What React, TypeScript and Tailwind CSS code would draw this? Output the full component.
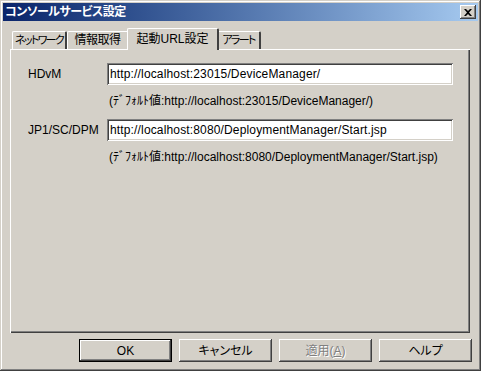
import React from "react";

const raised =
  "shadow-[inset_-1px_-1px_#404040,inset_1px_1px_#ffffff,inset_-2px_-2px_#808080,inset_2px_2px_#d4d0c8]";

function Tab({ label, selected, w, small }: { label: string; selected?: boolean; w: string; small?: boolean }) {
  if (selected) {
    return (
      <div
        className={`relative z-10 -mx-[2px] ${w} shrink-0 whitespace-nowrap h-[22px] -mb-[1px] bg-[#d4d0c8] border-t border-l border-white border-r-2 border-r-[#404040] rounded-t-[2px] flex items-start justify-center pt-[3px] text-black`}
      >
        {label}
      </div>
    );
  }
  return (
    <div
      className={`${w} shrink-0 whitespace-nowrap h-[18px] bg-[#d4d0c8] border-t border-l border-white border-r-2 border-r-[#404040] rounded-t-[2px] flex items-start justify-center pt-[1px] text-black ${
        small ? "text-[11px] tracking-[-1.7px]" : "tracking-[-0.5px]"
      }`}
    >
      {label}
    </div>
  );
}

function Btn({ children, def, disabled }: { children: React.ReactNode; def?: boolean; disabled?: boolean }) {
  if (def) {
    return (
      <div className="w-[93px] h-[23px] border border-black">
        <div className={`w-full h-full ${raised} flex items-center justify-center text-black`}>{children}</div>
      </div>
    );
  }
  return (
    <div
      className={`w-[93px] h-[23px] ${raised} flex items-center justify-center ${
        disabled ? "text-[#808080] [text-shadow:1px_1px_#ffffff]" : "text-black"
      }`}
    >
      {children}
    </div>
  );
}

function Field({ value }: { value: string }) {
  return (
    <div className="w-[346px] h-[22px] bg-white shadow-[inset_1px_1px_#808080,inset_-1px_-1px_#ffffff,inset_2px_2px_#404040,inset_-2px_-2px_#d4d0c8] flex items-center pl-[3px] text-black tracking-[0.15px] whitespace-nowrap">
      {value}
    </div>
  );
}

export default function App() {
  return (
    <div
      className="w-[481px] h-[371px] bg-[#d4d0c8] p-[3px] flex flex-col text-[12px] leading-[14px] [font-feature-settings:'palt'] shadow-[inset_-1px_-1px_#404040,inset_1px_1px_#d4d0c8,inset_-2px_-2px_#808080,inset_2px_2px_#ffffff]"
      style={{ fontFamily: '"Liberation Sans", "Noto Sans CJK JP", sans-serif' }}
    >
      {/* title bar */}
      <div className="h-[18px] bg-gradient-to-r from-[#0a246a] to-[#a6caf0] flex items-center justify-between pl-[2px] pr-[2px]">
        <span className="text-white font-bold text-[12px] tracking-[-0.5px]">コンソールサービス設定</span>
        <div className={`w-[16px] h-[14px] bg-[#d4d0c8] ${raised} flex items-center justify-center`}>
          <svg width="8" height="7" viewBox="0 0 8 7">
            <path d="M0 0h2l2 2 2-2h2L5 3.5 8 7H6L4 5 2 7H0l3-3.5z" fill="#000" />
          </svg>
        </div>
      </div>

      <div className="flex flex-col px-[7px] pt-[7px] flex-1">
        {/* tabs */}
        <div className="flex items-end h-[21px] pl-[2px]">
          <Tab label="ネットワーク" w="w-[55px]" small />
          <Tab label="情報取得" w="w-[62px]" />
          <Tab label="起動URL設定" w="w-[92px]" selected />
          <Tab label="アラート" w="w-[44px]" small />
        </div>

        {/* panel */}
        <div className="w-[460px] h-[284px] border-t border-l border-white shadow-[inset_-1px_-1px_#404040,inset_-2px_-2px_#808080] pt-[13px] pl-[17px]">
          <div className="flex items-center h-[22px]">
            <span className="w-[79px] text-black">HDvM</span>
            <Field value="http://localhost:23015/DeviceManager/" />
          </div>
          <div className="mt-[8px] h-[16px] flex items-center pl-[81px] text-black whitespace-nowrap">
            (ﾃﾞﾌｫﾙﾄ値:http://localhost:23015/DeviceManager/)
          </div>
          <div className="mt-[10px] flex items-center h-[22px]">
            <span className="w-[79px] text-black">JP1/SC/DPM</span>
            <Field value="http://localhost:8080/DeploymentManager/Start.jsp" />
          </div>
          <div className="mt-[8px] h-[16px] flex items-center pl-[81px] text-black whitespace-nowrap">
            (ﾃﾞﾌｫﾙﾄ値:http://localhost:8080/DeploymentManager/Start.jsp)
          </div>
        </div>

        {/* buttons */}
        <div className="flex justify-end gap-[7px] mt-[6px] mr-[-1px]">
          <Btn def>OK</Btn>
          <Btn>キャンセル</Btn>
          <Btn disabled>
            <span>
              適用(<span className="underline">A</span>)
            </span>
          </Btn>
          <Btn>ヘルプ</Btn>
        </div>
      </div>
    </div>
  );
}
